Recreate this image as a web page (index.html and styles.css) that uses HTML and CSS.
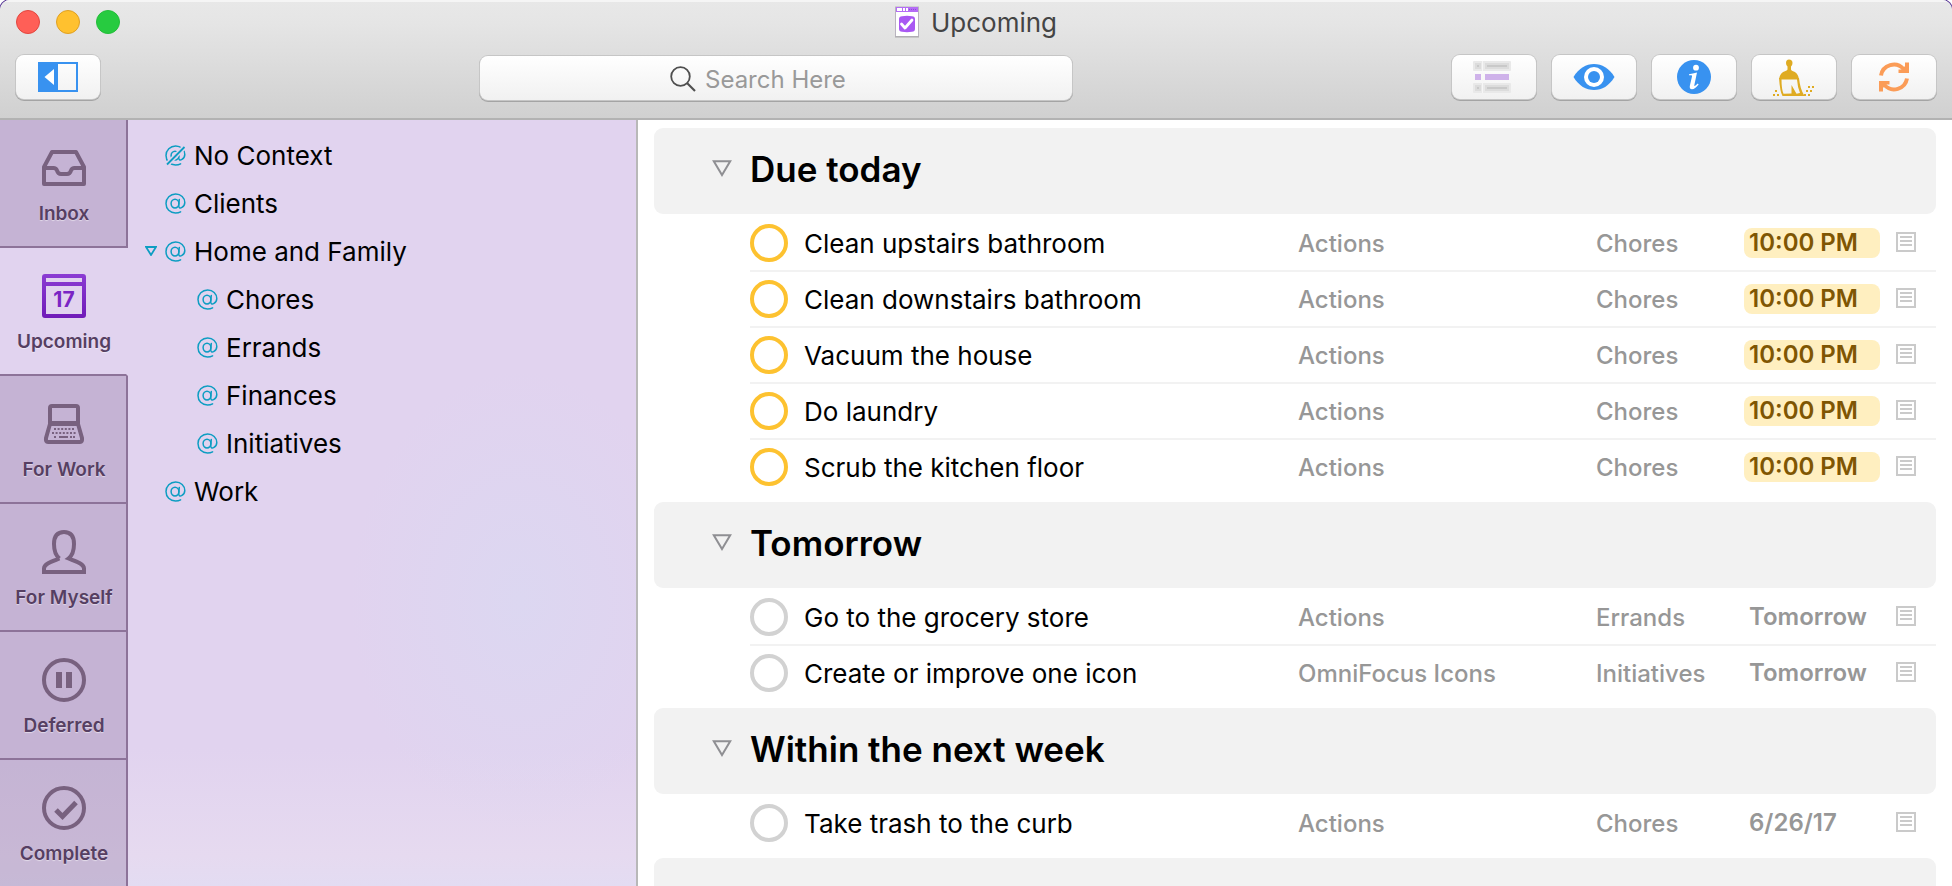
FILE: index.html
```html
<!DOCTYPE html>
<html lang="en">
<head>
<meta charset="utf-8">
<meta name="viewport" content="width=device-width, initial-scale=1">
<title>Upcoming</title>
<link rel="stylesheet" href="styles.css">
</head>
<body>
<svg class="defs" aria-hidden="true">
  <symbol id="at" viewBox="0 0 21 21">
    <g fill="none" stroke="currentColor" stroke-width="1.5" stroke-linecap="round">
      <ellipse cx="10" cy="10.6" rx="3.9" ry="4.3"/>
      <path d="M14.3 6.4 L13.7 12.2 C13.5 15 15.2 15.4 16.6 14.7 C18.8 13.6 19.8 11.6 19.8 9.6 C19.8 4.6 15.8 1 10.7 1 C5.2 1 1 5.2 1 10.5 C1 16 5 20 10.5 20 C12.5 20 14.2 19.6 15.6 18.8"/>
    </g>
  </symbol>
  <symbol id="note" viewBox="0 0 20 20">
    <rect x="1" y="1" width="18" height="18" fill="#fff" stroke="#cacaca" stroke-width="2"/>
    <path d="M4 5h12M4 9h12M4 13h12" stroke="#cacaca" stroke-width="2"/>
  </symbol>
  <symbol id="tri" viewBox="0 0 20 17">
    <path d="M1.8 1.2H18.2L10 15Z" fill="none" stroke="currentColor" stroke-width="2"/>
  </symbol>
</svg>

<div class="window">
  <header class="titlebar">
    <div class="title-row">
      <div class="lights">
        <button class="light close" aria-label="Close"></button>
        <button class="light minimize" aria-label="Minimize"></button>
        <button class="light expand" aria-label="Zoom"></button>
      </div>
      <h1 class="title">
        <svg width="24" height="32" viewBox="0 0 24 32" aria-hidden="true">
          <rect x="0.5" y="1" width="23" height="29.5" fill="#fff" stroke="#b9b3bf"/>
          <rect x="1" y="1" width="22" height="5" fill="#b46cf5"/>
          <path d="M2 3.5h5M8 3.5h2M11 3.5h2" stroke="#fff" stroke-width="3"/>
          <path d="M14 3.5h8" stroke="#8f48da" stroke-dasharray="1 1"/>
          <path d="M4 13Q4 10.5 7 10.2Q12 9.4 17 10.2Q20 10.5 20 13V23Q20 25.5 17 25.8Q12 26.5 7 25.8Q4 25.5 4 23Z" fill="#a958f3"/>
          <path d="M6.5 18l3.5 4L17 14" fill="none" stroke="#fff" stroke-width="2.8" stroke-linecap="round" stroke-linejoin="round"/>
          <path d="M0 31h24" stroke="#a9a9a9"/>
        </svg>
        <span>Upcoming</span>
      </h1>
    </div>
    <div class="tool-row">
      <button class="tool" aria-label="Toggle sidebar">
        <svg width="40" height="30" viewBox="0 0 40 30"><rect x="1" y="1" width="38" height="28" fill="none" stroke="#3892f0" stroke-width="2"/><rect width="20" height="30" fill="#3892f0"/><path d="M16 7v16L6.5 15Z" fill="#fff"/></svg>
      </button>
      <label class="search">
        <svg width="26" height="26" viewBox="0 0 26 26" aria-hidden="true"><circle cx="10.5" cy="10.5" r="9.3" fill="none" stroke="#4f4f4f" stroke-width="1.8"/><path d="M17 17l8 8" stroke="#4f4f4f" stroke-width="2.2"/></svg>
        <input type="text" placeholder="Search Here" aria-label="Search Here">
      </label>
      <div class="tools">
        <button class="tool" aria-label="Focus" disabled>
          <svg width="42" height="34" viewBox="0 0 42 34"><g fill="#e9e9e9"><rect y="1" width="38" height="10" rx="1"/><rect y="23" width="38" height="10" rx="1"/></g><g fill="#dcdcdc"><rect x="2" y="3" width="6" height="6"/><rect x="12" y="3" width="24" height="6"/><rect x="2" y="25" width="6" height="6"/><rect x="12" y="25" width="24" height="6"/></g><path d="M4 6h2M14 6h20M4 28h2M14 28h20" stroke="#c9c9c9" stroke-width="2"/><path d="M9.5 1v10M9.5 23v10" stroke="#f6f6f6"/><path d="M2 17h6M12 17h24" stroke="#cfb2ea" stroke-width="6"/></svg>
        </button>
        <button class="tool" aria-label="View">
          <svg width="42" height="28" viewBox="0 0 42 28"><path d="M0.5 14C6 5 13 1 21 1s15 4 20.5 13C36 23 29 27 21 27S6 23 0.5 14Z" fill="#3892f0"/><circle cx="21" cy="14" r="10" fill="#fff"/><circle cx="21" cy="14" r="6" fill="#3892f0"/></svg>
        </button>
        <button class="tool" aria-label="Inspect">
          <svg width="34" height="34" viewBox="0 0 34 34"><circle cx="17" cy="17" r="17" fill="#3892f0"/><circle cx="19" cy="7.7" r="2.9" fill="#fff"/><path d="M12 14.2C14.5 13.8 17 13.3 20 12.6L17.3 25.2C17.2 26.4 18 26.4 20.8 23.6L21.6 24.4C19.2 27.5 17 29.2 15 29.2C13 29.2 12.4 27.6 12.9 25.4L15 16.4C15.3 15.2 14.5 15.2 12 15.3Z" fill="#fff"/></svg>
        </button>
        <button class="tool" aria-label="Clean Up">
          <svg width="42" height="37" viewBox="0 0 42 37"><g fill="#dfab22"><path d="M16 0.5Q13 0.5 13 4Q13 6 14.5 7.5V10.5Q14.5 11.5 12.5 11.9Q7 13.5 6 20H26Q25 13.5 19.5 11.9Q18 11.5 18 10.5V7.5Q19.5 6 19.5 4Q19.5 0.5 16 0.5Z"/><path d="M6 19h20Q27 30 31.5 37H9.5Q7 33 6 19ZM8.5 20.5Q8.5 30 10.5 34.8L18.5 34.6V26L23.5 34.8L27 34Q24.5 28 24 20.5Z" fill-rule="evenodd"/><path d="M2 31h2v2h-2zM0 35h2v2H0zM4 35h2v2H4zM35 27h2v2h-2zM39 27h2v2h-2zM33 31h2v2h-2zM37 31h2v2h-2zM31 35h2v2h-2zM35 35h2v2h-2z"/></g></svg>
        </button>
        <button class="tool" aria-label="Sync">
          <svg width="32" height="32" viewBox="0 0 32 32"><g fill="none" stroke="#fb9c57" stroke-width="4"><path d="M3 14.5A13 13 0 0 1 25.5 8"/><path d="M29 17.5A13 13 0 0 1 6.5 24"/></g><path d="M31 1.5V12H20.5V8.5H24L27 5V1.5ZM1 30.5V20H11.5V23.5H8L5 27V30.5Z" fill="#fb9c57"/></svg>
        </button>
      </div>
    </div>
  </header>

  <div class="body">
    <div class="sidebar">
      <nav class="tabs" aria-label="Perspectives">
        <button class="tab">
          <svg width="44" height="44" viewBox="0 0 44 44"><g fill="none" stroke="currentColor" stroke-width="4" stroke-linejoin="round"><path d="M2 21L10 6H34L42 21V38H2Z"/><path d="M2 22H11.5Q14 22 15 24.5Q16 28 19 28H25Q28 28 29 24.5Q30 22 32.5 22H42"/></g></svg>
          <span>Inbox</span>
        </button>
        <button class="tab active">
          <svg width="44" height="44" viewBox="0 0 44 44"><defs><linearGradient id="cal" x2="0" y2="1"><stop stop-color="#8b3cd3"/><stop offset="1" stop-color="#701bb8"/></linearGradient></defs><path fill="url(#cal)" fill-rule="evenodd" d="M3 0H41Q44 0 44 3V41Q44 44 41 44H3Q0 44 0 41V3Q0 0 3 0ZM4 4V8H40V4ZM4 12V40H40V12Z"/><text class="day" x="22" y="33" text-anchor="middle">17</text></svg>
          <span>Upcoming</span>
        </button>
        <button class="tab">
          <svg width="44" height="44" viewBox="0 0 44 44"><g fill="none" stroke="currentColor" stroke-width="4" stroke-linejoin="round"><path d="M8 21V6Q8 4 10 4H34Q36 4 36 6V21Z"/><path d="M8 22H36L40 36Q40.5 40 38 40H6Q3.5 40 4 36Z"/></g><path d="M12 27h20M10 31h24" stroke="currentColor" stroke-width="2" stroke-dasharray="2 1.6"/><path d="M12 35h2M17 35h9M28 35h2M31 35h2" stroke="currentColor" stroke-width="2"/></svg>
          <span>For Work</span>
        </button>
        <button class="tab">
          <svg width="44" height="44" viewBox="0 0 44 44"><path fill="none" stroke="currentColor" stroke-width="4" d="M17.5 28.5C13 25 12 20 12 14C12 6 15 2 22 2S32 6 32 14C32 20 31 25 26.5 28.5C33 31 42 33.5 42 38.5V42H2V38.5C2 33.5 11 31 17.5 28.5"/></svg>
          <span>For Myself</span>
        </button>
        <button class="tab">
          <svg width="44" height="44" viewBox="0 0 44 44"><circle cx="22" cy="22" r="20" fill="none" stroke="currentColor" stroke-width="4"/><path d="M17 14v16M27 14v16" stroke="currentColor" stroke-width="6"/></svg>
          <span>Deferred</span>
        </button>
        <button class="tab">
          <svg width="44" height="44" viewBox="0 0 44 44"><circle cx="22" cy="22" r="20" fill="none" stroke="currentColor" stroke-width="4"/><path d="M14 24l6.5 6.5L34 16.5" fill="none" stroke="currentColor" stroke-width="5"/></svg>
          <span>Complete</span>
        </button>
      </nav>

      <ul class="contexts">
        <li><svg class="at" viewBox="0 0 21 21"><use href="#at"/><path d="M2.5 19L19.5 2" stroke="#e1d3ef" stroke-width="5"/><path d="M2 19.5L19.5 2" stroke="currentColor" stroke-width="1.8"/></svg>No Context</li>
        <li><svg class="at"><use href="#at"/></svg>Clients</li>
        <li class="parent"><button class="toggle" aria-label="Collapse Home and Family"><svg width="12" height="10" viewBox="0 0 12 10"><path d="M1 1H11L6 9Z" fill="none" stroke="currentColor" stroke-width="1.8"/></svg></button><svg class="at"><use href="#at"/></svg>Home and Family</li>
        <li class="child"><svg class="at"><use href="#at"/></svg>Chores</li>
        <li class="child"><svg class="at"><use href="#at"/></svg>Errands</li>
        <li class="child"><svg class="at"><use href="#at"/></svg>Finances</li>
        <li class="child"><svg class="at"><use href="#at"/></svg>Initiatives</li>
        <li><svg class="at"><use href="#at"/></svg>Work</li>
      </ul>
    </div>

    <main class="outline">
      <section class="group">
        <h2 class="group-head"><button class="fold" aria-label="Collapse Due today"><svg width="20" height="17"><use href="#tri"/></svg></button>Due today</h2>
        <table class="tasks due">
          <colgroup><col class="c-check"><col><col class="c-project"><col class="c-context"><col class="c-date"><col class="c-note"></colgroup>
          <tr><td><input type="checkbox" id="t1"></td><td><label for="t1">Clean upstairs bathroom</label></td><td>Actions</td><td>Chores</td><td><span class="date">10:00 PM</span></td><td><svg class="note"><use href="#note"/></svg></td></tr>
          <tr><td><input type="checkbox" id="t2"></td><td><label for="t2">Clean downstairs bathroom</label></td><td>Actions</td><td>Chores</td><td><span class="date">10:00 PM</span></td><td><svg class="note"><use href="#note"/></svg></td></tr>
          <tr><td><input type="checkbox" id="t3"></td><td><label for="t3">Vacuum the house</label></td><td>Actions</td><td>Chores</td><td><span class="date">10:00 PM</span></td><td><svg class="note"><use href="#note"/></svg></td></tr>
          <tr><td><input type="checkbox" id="t4"></td><td><label for="t4">Do laundry</label></td><td>Actions</td><td>Chores</td><td><span class="date">10:00 PM</span></td><td><svg class="note"><use href="#note"/></svg></td></tr>
          <tr><td><input type="checkbox" id="t5"></td><td><label for="t5">Scrub the kitchen floor</label></td><td>Actions</td><td>Chores</td><td><span class="date">10:00 PM</span></td><td><svg class="note"><use href="#note"/></svg></td></tr>
        </table>
      </section>
      <section class="group">
        <h2 class="group-head"><button class="fold" aria-label="Collapse Tomorrow"><svg width="20" height="17"><use href="#tri"/></svg></button>Tomorrow</h2>
        <table class="tasks">
          <colgroup><col class="c-check"><col><col class="c-project"><col class="c-context"><col class="c-date"><col class="c-note"></colgroup>
          <tr><td><input type="checkbox" id="t6"></td><td><label for="t6">Go to the grocery store</label></td><td>Actions</td><td>Errands</td><td><span class="date">Tomorrow</span></td><td><svg class="note"><use href="#note"/></svg></td></tr>
          <tr><td><input type="checkbox" id="t7"></td><td><label for="t7">Create or improve one icon</label></td><td>OmniFocus Icons</td><td>Initiatives</td><td><span class="date">Tomorrow</span></td><td><svg class="note"><use href="#note"/></svg></td></tr>
        </table>
      </section>
      <section class="group">
        <h2 class="group-head"><button class="fold" aria-label="Collapse Within the next week"><svg width="20" height="17"><use href="#tri"/></svg></button>Within the next week</h2>
        <table class="tasks">
          <colgroup><col class="c-check"><col><col class="c-project"><col class="c-context"><col class="c-date"><col class="c-note"></colgroup>
          <tr><td><input type="checkbox" id="t8"></td><td><label for="t8">Take trash to the curb</label></td><td>Actions</td><td>Chores</td><td><span class="date">6/26/17</span></td><td><svg class="note"><use href="#note"/></svg></td></tr>
        </table>
      </section>
      <section class="group">
        <div class="group-head"></div>
      </section>
    </main>
  </div>
</div>
</body>
</html>
```

FILE: styles.css
```css
* { box-sizing: border-box; }
body {
  margin: 0;
  height: 100vh;
  overflow: hidden;
  background: #fff;
  font-family: Inter, "Liberation Sans", sans-serif;
  color: #000;
}
.defs { display: none; }
button {
  margin: 0;
  padding: 0;
  border: 0;
  background: none;
  font: inherit;
  color: inherit;
}
button svg { display: block; }
.window {
  display: flex;
  flex-direction: column;
  height: 100vh;
  overflow: hidden;
  border-radius: 10px 10px 0 0;
  box-shadow: 0 0 0 1px #5b3a97;
}

/* Title bar and toolbar */
.titlebar {
  flex: none;
  height: 120px;
  padding: 0 16px;
  background: linear-gradient(#e8e8e8, #e5e5e5 20%, #d0d0d0);
  border-bottom: 2px solid #b2b2b2;
  box-shadow: inset 0 2px 0 #f5f5f5;
}
.title-row {
  display: grid;
  grid-template-columns: 1fr auto 1fr;
  align-items: center;
  height: 44px;
}
.lights { display: flex; gap: 16px; }
.light {
  width: 24px;
  height: 24px;
  border-radius: 50%;
  border: 1px solid #e2463f;
  background: #ff5f57;
}
.light.minimize { background: #ffc12f; border-color: #dfa023; }
.light.expand { background: #27cb40; border-color: #24bd3a; }
.title {
  display: flex;
  align-items: center;
  gap: 12px;
  margin: 0;
  font-size: 26px;
  font-weight: 400;
  color: #444;
}
.tool-row {
  display: flex;
  align-items: flex-start;
  justify-content: space-between;
  padding-top: 11px;
}
.tools { display: flex; gap: 16px; }
.tool {
  display: flex;
  align-items: center;
  justify-content: center;
  width: 84px;
  height: 44px;
}
.tool, .search {
  border-radius: 8px;
  background: linear-gradient(#fff, #f1f1f1);
  box-shadow: 0 0 0 1px #c6c6c6, 0 1px 0 1px #a4a4a4;
}
.search {
  display: flex;
  align-items: center;
  gap: 9px;
  width: 592px;
  height: 44px;
  margin-top: 1px;
  padding: 2px 0 0 190px;
}
.search svg { flex: none; }
.search input {
  flex: 1;
  min-width: 0;
  padding: 0;
  border: 0;
  outline: 0;
  background: none;
  font: inherit;
  font-size: 24px;
}
.search input::placeholder { color: #999; opacity: 1; }

/* Sidebar */
.body { flex: 1; display: flex; min-height: 0; }
.sidebar {
  flex: none;
  display: flex;
  width: 638px;
  border-right: 2px solid #b8b8b8;
  background:
    radial-gradient(ellipse 170px 230px at 520px 480px, #dcd7f1, #dcd7f100),
    linear-gradient(#e1d3ef 82%, #e6daf0 96%, #e3dcf2);
}
.tabs { display: flex; flex-direction: column; width: 128px; }
.tab {
  flex: none;
  display: flex;
  flex-direction: column;
  align-items: center;
  gap: 12px;
  height: 128px;
  padding: 26px 0 0 2px;
  border-right: 2px solid #8d7399;
  border-bottom: 2px solid #8d7399;
  background: #9a85ac66;
  color: #78617f;
  font-size: 19px;
  font-weight: 600;
  line-height: 24px;
}
.tab span { color: #563f62; text-shadow: 0 1px 1px #ffffff80; }
.tab.active { background: none; border-right-color: transparent; }
.day { fill: #7a25c4; font-size: 21px; font-weight: 700; }
.contexts {
  flex: 1;
  margin: 0;
  padding: 11px 0 0 37px;
  list-style: none;
  font-size: 26px;
}
.contexts li { display: flex; align-items: center; height: 48px; }
.contexts .child { padding-left: 32px; }
.contexts .parent { margin-left: -20px; }
.at { flex: none; width: 21px; height: 21px; margin-right: 8px; color: #0d9dc2; }
.toggle { width: 12px; margin-right: 8px; color: #0d9dc2; }

/* Outline */
.outline {
  flex: 1;
  display: flex;
  flex-direction: column;
  gap: 6px;
  min-width: 0;
  padding: 8px 16px 0;
  overflow: hidden;
}
.group { flex: none; }
.group-head {
  display: flex;
  align-items: center;
  height: 86px;
  margin: 0 0 2px;
  padding: 0 0 4px 58px;
  border-radius: 9px;
  background: #f2f2f2;
  font-size: 35px;
  font-weight: 600;
}
.fold { width: 20px; margin-right: 18px; padding-bottom: 2px; color: #8f8f93; }
.tasks {
  width: calc(100% - 96px);
  margin-left: 96px;
  table-layout: fixed;
  border-spacing: 0;
  color: #979797;
  font-size: 24px;
  font-weight: 500;
}
.c-check { width: 54px; }
.c-project { width: 298px; }
.c-context { width: 148px; }
.c-date { width: 152px; }
.c-note { width: 40px; }
.tasks td {
  height: 56px;
  padding: 0;
  border-bottom: 2px solid #f2f2f2;
  vertical-align: middle;
  white-space: nowrap;
}
.tasks tr:last-child td { border-bottom-color: transparent; }
.tasks input {
  display: block;
  appearance: none;
  width: 38px;
  height: 38px;
  margin: 0;
  border: 4px solid #d2d2d2;
  border-radius: 50%;
}
.tasks label { color: #000; font-size: 26px; font-weight: 400; }
.date {
  display: block;
  width: 136px;
  padding-left: 5px;
  border-radius: 8px;
  font-weight: 600;
  line-height: 30px;
}
.due input { border-color: #fdc230; }
.due .date { background: #ffefc0; color: #7f5603; }
.note { display: block; width: 20px; height: 20px; margin-bottom: 3px; }
```
